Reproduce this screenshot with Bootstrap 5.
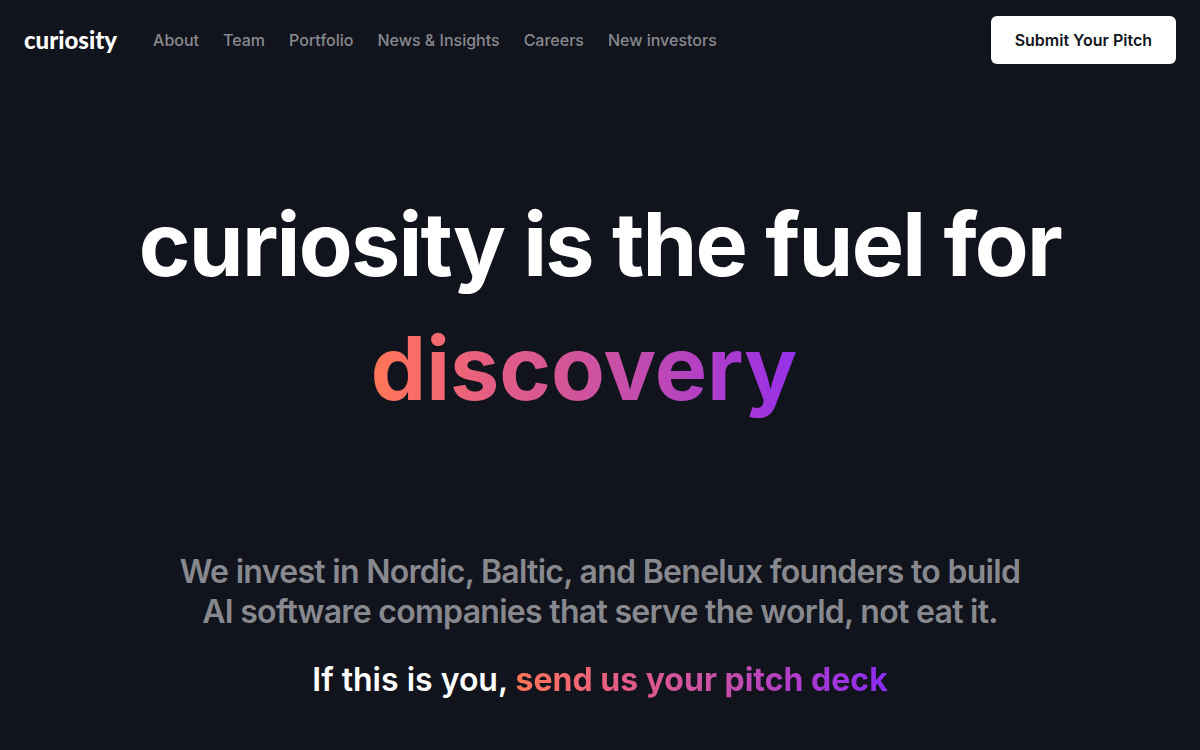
<!DOCTYPE html>
<html lang="en">
<head>
<meta charset="utf-8">
<meta name="viewport" content="width=device-width, initial-scale=1">
<title>curiosity</title>
<link href="https://cdn.jsdelivr.net/npm/bootstrap@5.3.0/dist/css/bootstrap.min.css" rel="stylesheet">
<style>
body { font-family: Inter, "Liberation Sans", sans-serif; background: #12141d; color: #fff; }
.site-bar { min-height: 80px; }
.brand-word { font-family: Lato, sans-serif; font-weight: 900; font-size: 24px; line-height: 24px; color: #fff; margin-right: 36px; }
.site-bar .nav-link { color: #88898e; font-weight: 500; font-size: 16px; line-height: 24px; }
.pitch-btn, .pitch-btn:hover { font-weight: 600; font-size: 16px; line-height: 24px; padding: 12px 24px; border: 0; border-radius: 6px; background: #fff; color: #12141d; }
.hero { padding-top: 102px; }
.headline { font-size: 88px; line-height: 124px; font-weight: 700; letter-spacing: -0.02em; margin-bottom: 122px; }
.sunset { background: linear-gradient(90deg, #ff7656, #f76b6c 12%, #e25c85 28%, #c74fa8 55%, #b03ccb 75%, #8b2cf5); -webkit-background-clip: text; background-clip: text; color: transparent; font-weight: 700; }
.headline .sunset { letter-spacing: 0; padding-right: 32px; }
.summary { font-size: 32px; line-height: 40px; font-weight: 600; letter-spacing: -0.022em; color: #88898e; max-width: 864px; margin-bottom: 28px; }
.call { font-size: 32px; line-height: 40px; font-weight: 600; }
</style>
</head>
<body>
<header class="site-bar d-flex align-items-center px-4">
  <a href="#" class="brand-word text-decoration-none">curiosity</a>
  <nav class="nav gap-4">
    <a class="nav-link p-0" href="#">About</a>
    <a class="nav-link p-0" href="#">Team</a>
    <a class="nav-link p-0" href="#">Portfolio</a>
    <a class="nav-link p-0" href="#">News &amp; Insights</a>
    <a class="nav-link p-0" href="#">Careers</a>
    <a class="nav-link p-0" href="#">New investors</a>
  </nav>
  <button type="button" class="btn pitch-btn ms-auto">Submit Your Pitch</button>
</header>
<main class="hero text-center">
  <h1 class="headline mt-0">curiosity is the fuel for<br><span class="sunset">discovery</span></h1>
  <p class="summary mx-auto">We invest in Nordic, Baltic, and Benelux founders to build AI software companies that serve the world, not eat it.</p>
  <p class="call">If this is you, <a href="#" class="sunset text-decoration-none">send us your pitch deck</a></p>
</main>
<script src="https://cdn.jsdelivr.net/npm/bootstrap@5.3.0/dist/js/bootstrap.bundle.min.js"></script>
</body>
</html>
